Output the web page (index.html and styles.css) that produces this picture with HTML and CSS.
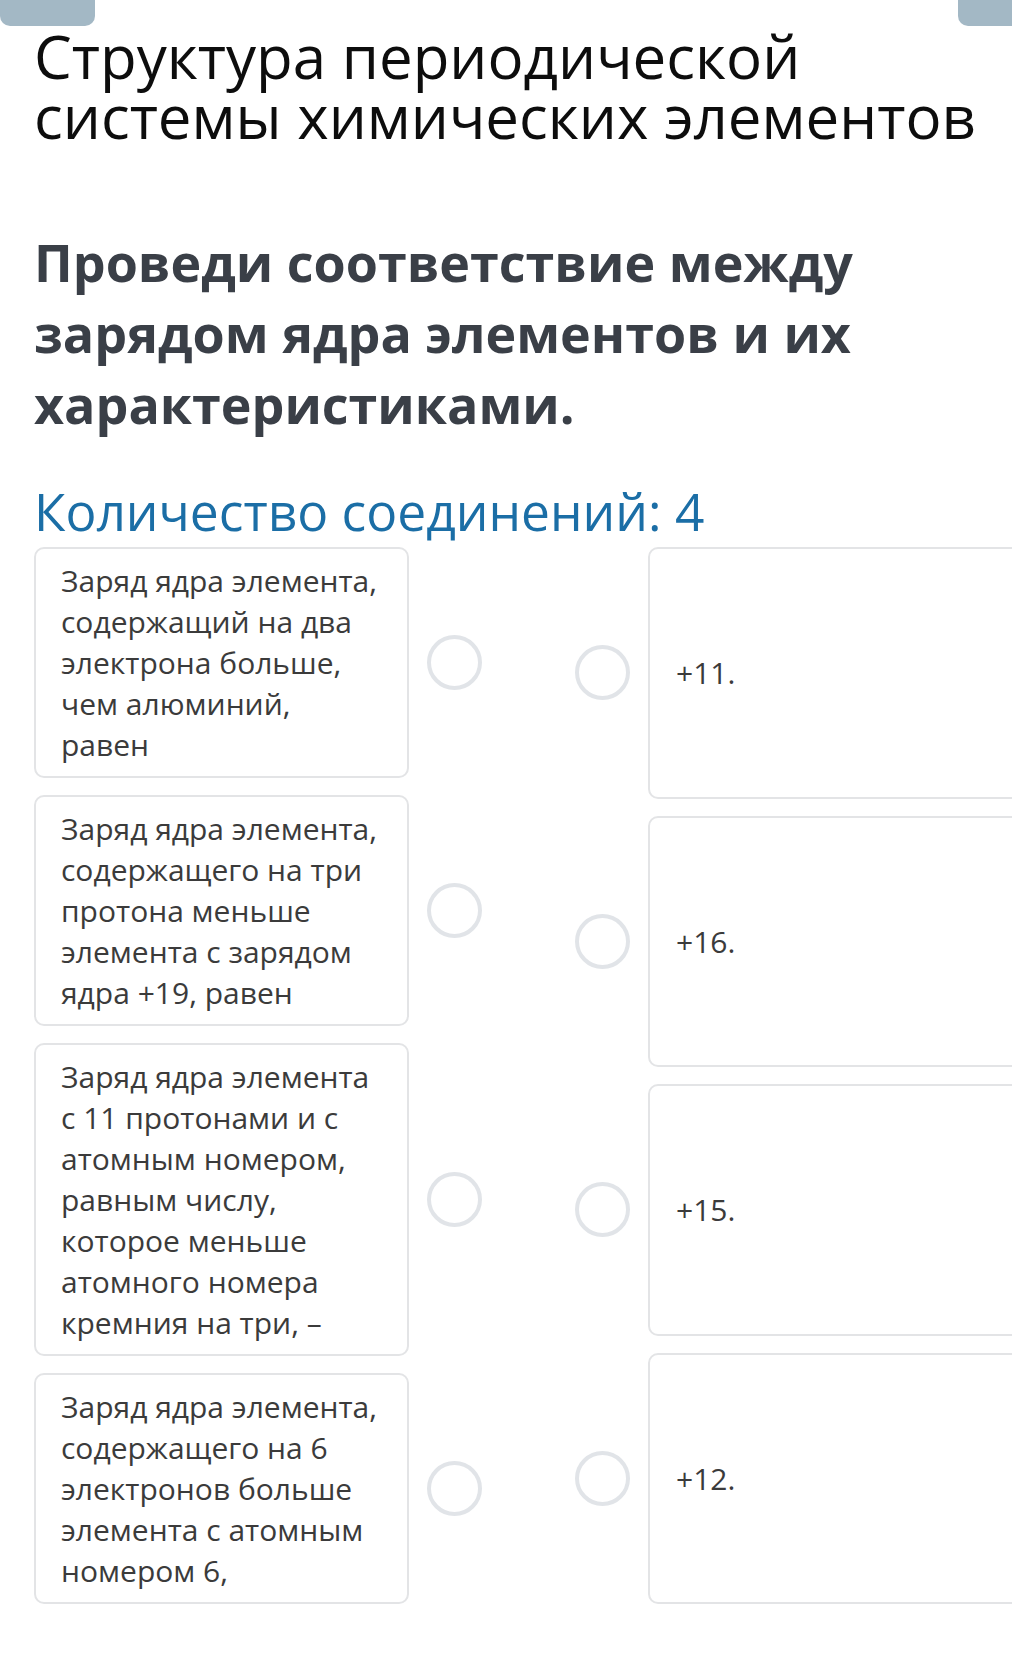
FILE: index.html
```html
<!DOCTYPE html>
<html lang="ru">
	<head>
		<meta charset="UTF-8" />
		<meta name="viewport" content="width=device-width, initial-scale=1.0" />
		<title>Структура периодической системы химических элементов</title>
		<link rel="stylesheet" href="styles.css">
	</head>
	<body>
		<div class="topbar">
			<div class="tab"></div>
			<div class="tab"></div>
		</div>

		<main class="content">
			<h1 class="title">
				<span class="title-line">Структура периодической</span>
				<span class="title-line">системы химических элементов</span>
			</h1>

			<h2 class="question">
				Проведи соответствие между зарядом ядра элементов и их характеристиками.
			</h2>

			<p class="count">Количество соединений: 4</p>

			<div class="board">
				<div class="column column-left">
					<div class="row">
						<div class="card card-left">Заряд ядра элемента,<br>содержащий на два<br>электрона больше,<br>чем алюминий,<br>равен</div>
						<span class="dot"></span>
					</div>
					<div class="row">
						<div class="card card-left">Заряд ядра элемента,<br>содержащего на три<br>протона меньше<br>элемента с зарядом<br>ядра +19, равен</div>
						<span class="dot"></span>
					</div>
					<div class="row">
						<div class="card card-left">Заряд ядра элемента<br>с 11 протонами и с<br>атомным номером,<br>равным числу,<br>которое меньше<br>атомного номера<br>кремния на три, –</div>
						<span class="dot"></span>
					</div>
					<div class="row">
						<div class="card card-left">Заряд ядра элемента,<br>содержащего на 6<br>электронов больше<br>элемента с атомным<br>номером 6,</div>
						<span class="dot"></span>
					</div>
				</div>

				<div class="column column-right">
					<div class="row row-right">
						<span class="dot"></span>
						<div class="card card-right">+11.</div>
					</div>
					<div class="row row-right">
						<span class="dot"></span>
						<div class="card card-right">+16.</div>
					</div>
					<div class="row row-right">
						<span class="dot"></span>
						<div class="card card-right">+15.</div>
					</div>
					<div class="row row-right">
						<span class="dot"></span>
						<div class="card card-right">+12.</div>
					</div>
				</div>
			</div>
		</main>
	</body>
</html>
```

FILE: styles.css
```css
html,
body {
	overflow-x: hidden;
}
body {
	font-family: 'Open Sans', 'Noto Sans', sans-serif;
	margin: 0;
	padding: 0;
	background: #fff;
	color: #3d3d3d;
}
.topbar {
	display: flex;
	justify-content: space-between;
	height: 26px;
}
.tab {
	width: 95px;
	height: 26px;
	background: #a3b8c5;
	border-radius: 0 0 10px 10px;
}
.tab:last-child {
	width: 54px;
	border-radius: 0 0 0 10px;
}
.content {
	padding: 0 0 50px 34px;
}
.title {
	margin: 0;
	font-weight: 400;
	color: #0d0d0d;
}
.title-line {
	display: block;
	font-size: 60px;
	line-height: 60px;
}
.question {
	margin: 80px 0 0;
	max-width: 860px;
	font-size: 52px;
	line-height: 71px;
	font-weight: 700;
	color: #3a3f47;
}
.count {
	margin: 42px 0 0;
	font-size: 51.5px;
	line-height: 60px;
	color: #1b6ea6;
}
.board {
	display: flex;
	gap: 93px;
	margin-top: 6px;
}
.column {
	display: flex;
	flex-direction: column;
	gap: 17px;
}
.column-right {
	flex: 1;
	margin-right: -40px;
}
.row {
	display: flex;
	align-items: center;
	gap: 18px;
}
.row-right {
	flex: 1;
	align-items: stretch;
}
.row-right .dot {
	align-self: center;
}
.card {
	box-sizing: border-box;
	border: 2px solid #e3e4e6;
	border-radius: 10px;
	background: #fff;
	font-size: 30px;
	line-height: 41px;
	color: #3b3b3b;
}
.card-left {
	width: 375px;
	padding: 11px 10px 11px 25px;
}
.card-right {
	flex: 1;
	display: flex;
	align-items: center;
	padding: 0 26px;
}
.dot {
	box-sizing: border-box;
	flex: none;
	width: 55px;
	height: 55px;
	border: 4px solid #e1e4e8;
	border-radius: 50%;
}
```
